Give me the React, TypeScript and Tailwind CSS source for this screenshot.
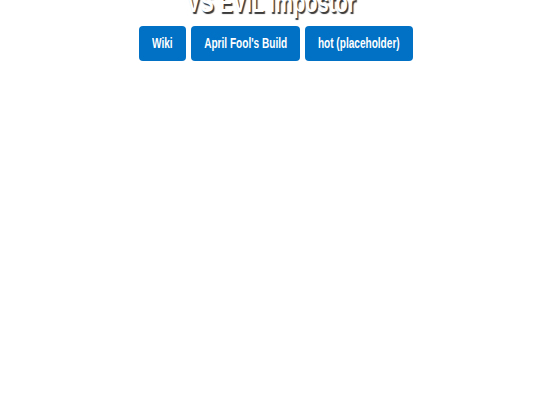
const links = [
    { label: 'Wiki', width: 'w-[47px]' },
    { label: "April Fool's Build", width: 'w-[109px]' },
    { label: 'hot (placeholder)', width: 'w-[108px]' },
];

export default function App() {
    return (
        <div className="w-[540px] h-[405px] overflow-hidden bg-white" style={{ fontFamily: '"Liberation Sans", Arial, sans-serif' }}>
            {/* Page title, scrolled partly out of view */}
            <h1 className="mt-[-11px] h-[28px] flex justify-center pl-[2px] text-[28px] leading-[28px] font-bold text-white [text-shadow:2px_2px_1px_#3a3a3a]">
                <span className="inline-block whitespace-nowrap scale-x-[0.72]">VS EVIL Impostor</span>
            </h1>

            {/* Link buttons */}
            <div className="mt-[9px] flex justify-center gap-[5px] pl-[12px]">
                {links.map((l) => (
                    <a
                        key={l.label}
                        href="#"
                        className={`${l.width} h-[35px] flex items-center justify-center rounded-[4px] bg-[#0071c5] text-white text-[14px] font-bold`}
                    >
                        <span className="inline-block whitespace-nowrap scale-x-[0.72]">{l.label}</span>
                    </a>
                ))}
            </div>
        </div>
    );
}
